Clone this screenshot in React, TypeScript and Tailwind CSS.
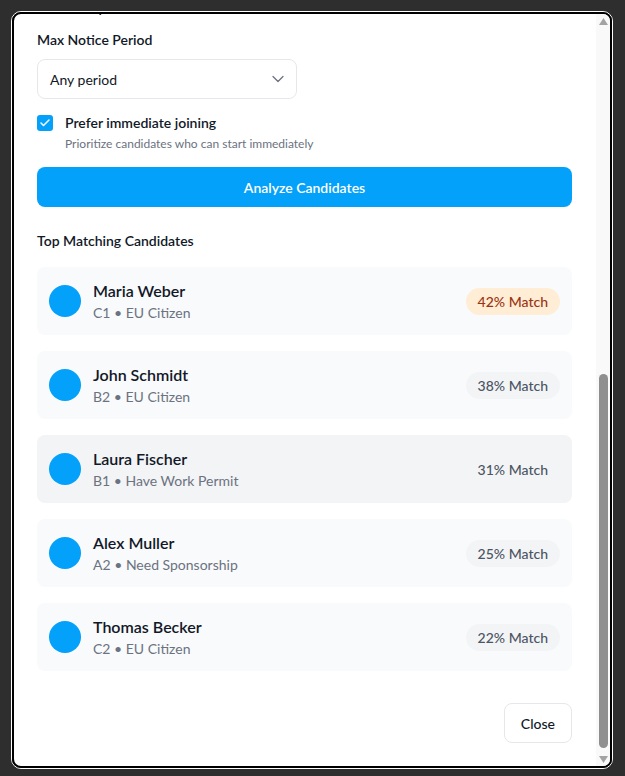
import React from "react";
import { ChevronDown, Check } from "lucide-react";

type Cand = { name: string; sub: string; match: number; hot?: boolean; hover?: boolean };

const candidates: Cand[] = [
  { name: "Maria Weber", sub: "C1 • EU Citizen", match: 42, hot: true },
  { name: "John Schmidt", sub: "B2 • EU Citizen", match: 38 },
  { name: "Laura Fischer", sub: "B1 • Have Work Permit", match: 31, hover: true },
  { name: "Alex Muller", sub: "A2 • Need Sponsorship", match: 25 },
  { name: "Thomas Becker", sub: "C2 • EU Citizen", match: 22 },
];

function CandidateRow({ c }: { c: Cand }) {
  return (
    <div
      className={
        "flex items-center justify-between rounded-lg p-3 " +
        (c.hover ? "bg-[#f3f4f6]" : "bg-[#f9fafb]")
      }
    >
      <div className="flex items-center gap-3">
        <div className="w-8 h-8 rounded-full bg-[#03a1fa]" />
        <div className="flex flex-col">
          <span className="text-[16px] leading-6 font-semibold text-[#111827]">{c.name}</span>
          <span className="text-[14px] leading-5 text-[#6b7280]">{c.sub}</span>
        </div>
      </div>
      <span
        className={
          "rounded-full px-3 h-[27px] flex items-center text-[14px] font-medium " +
          (c.hot
            ? "bg-[#ffedd5] text-[#9a3412]"
            : c.hover
            ? "bg-[#f3f4f6] text-[#4b5563]"
            : "bg-[#f3f4f6] text-[#4b5563]")
        }
      >
        {c.match}% Match
      </span>
    </div>
  );
}

export default function App() {
  return (
    <div className="w-[625px] h-[776px] bg-[#2e2e2e] pt-[11px] pl-[11px] font-[Lato,sans-serif]">
      <div className="w-[602px] h-[758px] rounded-[10px] border border-white">
        <div className="w-full h-full rounded-[9px] border-2 border-black bg-white overflow-hidden flex">
          {/* content */}
          <div className="flex-1 overflow-hidden pl-[23px] pr-[24px] flex flex-col">
            <p className="-mt-[16px] text-[14px] leading-5 font-semibold text-[#111827]">Availability</p>

            <div className="mt-[12px] flex flex-col">
              <label className="text-[14px] leading-5 font-semibold text-[#111827]">Max Notice Period</label>
              <div className="mt-[9px] w-[260px] h-[40px] rounded-lg border border-[#e5e7eb] bg-white flex items-center justify-between pl-3 pr-[8px]">
                <span className="text-[14px] text-[#111827]">Any period</span>
                <ChevronDown size={20} strokeWidth={1.5} className="text-[#6b7280]" />
              </div>
            </div>

            <div className="mt-[14px] flex items-start gap-3">
              <div className="mt-[2px] w-4 h-4 rounded-[3px] bg-[#03a1fa] flex items-center justify-center">
                <Check size={12} strokeWidth={3} className="text-white" />
              </div>
              <div className="flex flex-col">
                <span className="text-[14px] leading-5 font-semibold text-[#111827]">Prefer immediate joining</span>
                <span className="mt-[3px] text-[12px] leading-4 text-[#6b7280]">
                  Prioritize candidates who can start immediately
                </span>
              </div>
            </div>

            <button className="mt-[15px] h-[40px] w-full rounded-lg bg-[#03a1fa] text-white text-[14px] font-semibold">
              Analyze Candidates
            </button>

            <h3 className="mt-[24px] text-[14px] leading-5 font-semibold text-[#111827]">Top Matching Candidates</h3>

            <div className="mt-[16px] flex flex-col gap-4">
              {candidates.map((c) => (
                <CandidateRow key={c.name} c={c} />
              ))}
            </div>

            <div className="mt-[32px] flex justify-end">
              <button className="h-[40px] px-4 rounded-lg border border-[#e5e7eb] bg-white text-[14px] font-medium text-[#111827]">
                Close
              </button>
            </div>
          </div>

          {/* scrollbar */}
          <div className="w-[14px] bg-[#f9f9f9] flex flex-col pt-[4px] pb-[3px]">
            <svg width="9" height="7" viewBox="0 0 9 7" className="ml-[3px]">
              <polygon points="0,7 4.5,0 9,7" fill="#a3a3a3" />
            </svg>
            <div className="flex-1 flex flex-col justify-end">
              <div className="ml-[3px] w-[9px] h-[374px] rounded-full bg-[#8f8f8f]" />
            </div>
            <svg width="9" height="7" viewBox="0 0 9 7" className="ml-[3px] mt-[8px]">
              <polygon points="0,0 9,0 4.5,7" fill="#a3a3a3" />
            </svg>
          </div>
        </div>
      </div>
    </div>
  );
}
